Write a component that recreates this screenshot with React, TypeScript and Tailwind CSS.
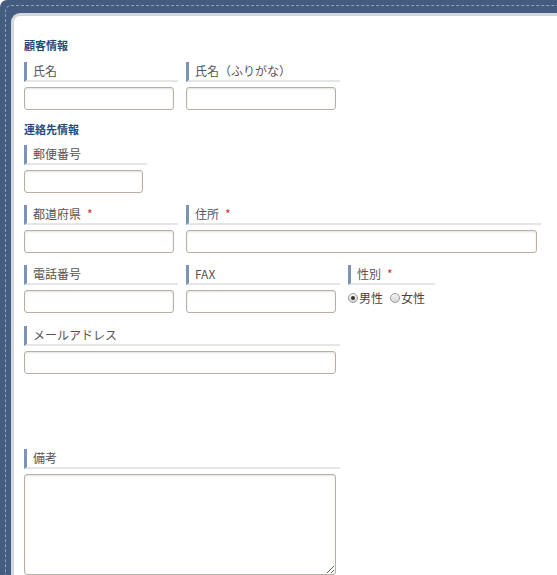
import React from "react";

const font = { fontFamily: '"Noto Sans CJK JP", "Noto Sans", sans-serif' };

function Label({ text, width, required }: { text: string; width: string; required?: boolean }) {
  return (
    <div className={`${width} h-[20px] flex items-center border-l-[3px] border-l-[#7a93b6] border-b-2 border-b-[#e6e6e6] pl-[6px] text-[12px] text-[#555]`}>
      <span>{text}</span>
      {required && <span className="ml-[6px] text-[#c33]">*</span>}
    </div>
  );
}

function Field({ label, labelW, inputW, required, mr = true }: { label: string; labelW: string; inputW: string; required?: boolean; mr?: boolean }) {
  return (
    <div className={mr ? "mr-[8px]" : ""}>
      <Label text={label} width={labelW} required={required} />
      <input className={`${inputW} mt-[5px] h-[23px] block bg-white border border-[#b8b0a6] rounded-[3px] shadow-[inset_0_1px_2px_rgba(0,0,0,0.12)] outline-none`} />
    </div>
  );
}

function Radio({ checked }: { checked?: boolean }) {
  return (
    <span className="inline-flex w-[10px] h-[10px] rounded-full border border-[#9a9a9a] bg-gradient-to-b from-[#f4f4f4] to-[#d6d6d6] items-center justify-center mr-[1px]">
      {checked && <span className="w-[4px] h-[4px] rounded-full bg-[#333]" />}
    </span>
  );
}

export default function App() {
  return (
    <div style={font} className="relative w-[557px] h-[575px] overflow-hidden bg-[#435c7f] rounded-tl-[7px] pt-[13px] pl-[11px]">
      <div className="absolute top-[5px] left-[5px] right-0 bottom-0 border-t border-l border-dashed border-[#8ea3bf] rounded-tl-[6px] pointer-events-none" />
      <div className="relative h-full bg-white border-t-[3px] border-l-[3px] border-[#d3d6db] rounded-tl-[9px] pl-[10px] pt-[22px]">
        <div className="text-[11px] leading-[14px] font-bold text-[#1f4b7a]">顧客情報</div>
        <div className="flex mt-[10px]">
          <Field label="氏名" labelW="w-[154px]" inputW="w-[150px]" />
          <Field label="氏名（ふりがな）" labelW="w-[154px]" inputW="w-[150px]" />
        </div>

        <div className="mt-[12px] text-[11px] leading-[14px] font-bold text-[#1f4b7a]">連絡先情報</div>
        <div className="flex mt-[9px]">
          <Field label="郵便番号" labelW="w-[123px]" inputW="w-[119px]" />
        </div>

        <div className="flex mt-[12px]">
          <Field label="都道府県" labelW="w-[154px]" inputW="w-[150px]" required />
          <Field label="住所" labelW="w-[355px]" inputW="w-[351px]" required />
        </div>

        <div className="flex mt-[12px]">
          <Field label="電話番号" labelW="w-[154px]" inputW="w-[150px]" />
          <Field label="FAX" labelW="w-[154px]" inputW="w-[150px]" />
          <div>
            <Label text="性別" width="w-[87px]" required />
            <div className="mt-[5px] flex items-center text-[12px] leading-[16px] text-[#444]">
              <label className="flex items-center">
                <Radio checked />
                <span>男性</span>
              </label>
              <label className="flex items-center ml-[7px]">
                <Radio />
                <span>女性</span>
              </label>
            </div>
          </div>
        </div>

        <div className="flex mt-[13px]">
          <Field label="メールアドレス" labelW="w-[316px]" inputW="w-[312px]" />
        </div>

        <div className="mt-[75px]">
          <Label text="備考" width="w-[316px]" />
          <textarea className="block mt-[5px] w-[312px] h-[101px] bg-white border border-[#b8b0a6] rounded-[3px] shadow-[inset_0_1px_2px_rgba(0,0,0,0.12)] outline-none" />
        </div>
      </div>
    </div>
  );
}
